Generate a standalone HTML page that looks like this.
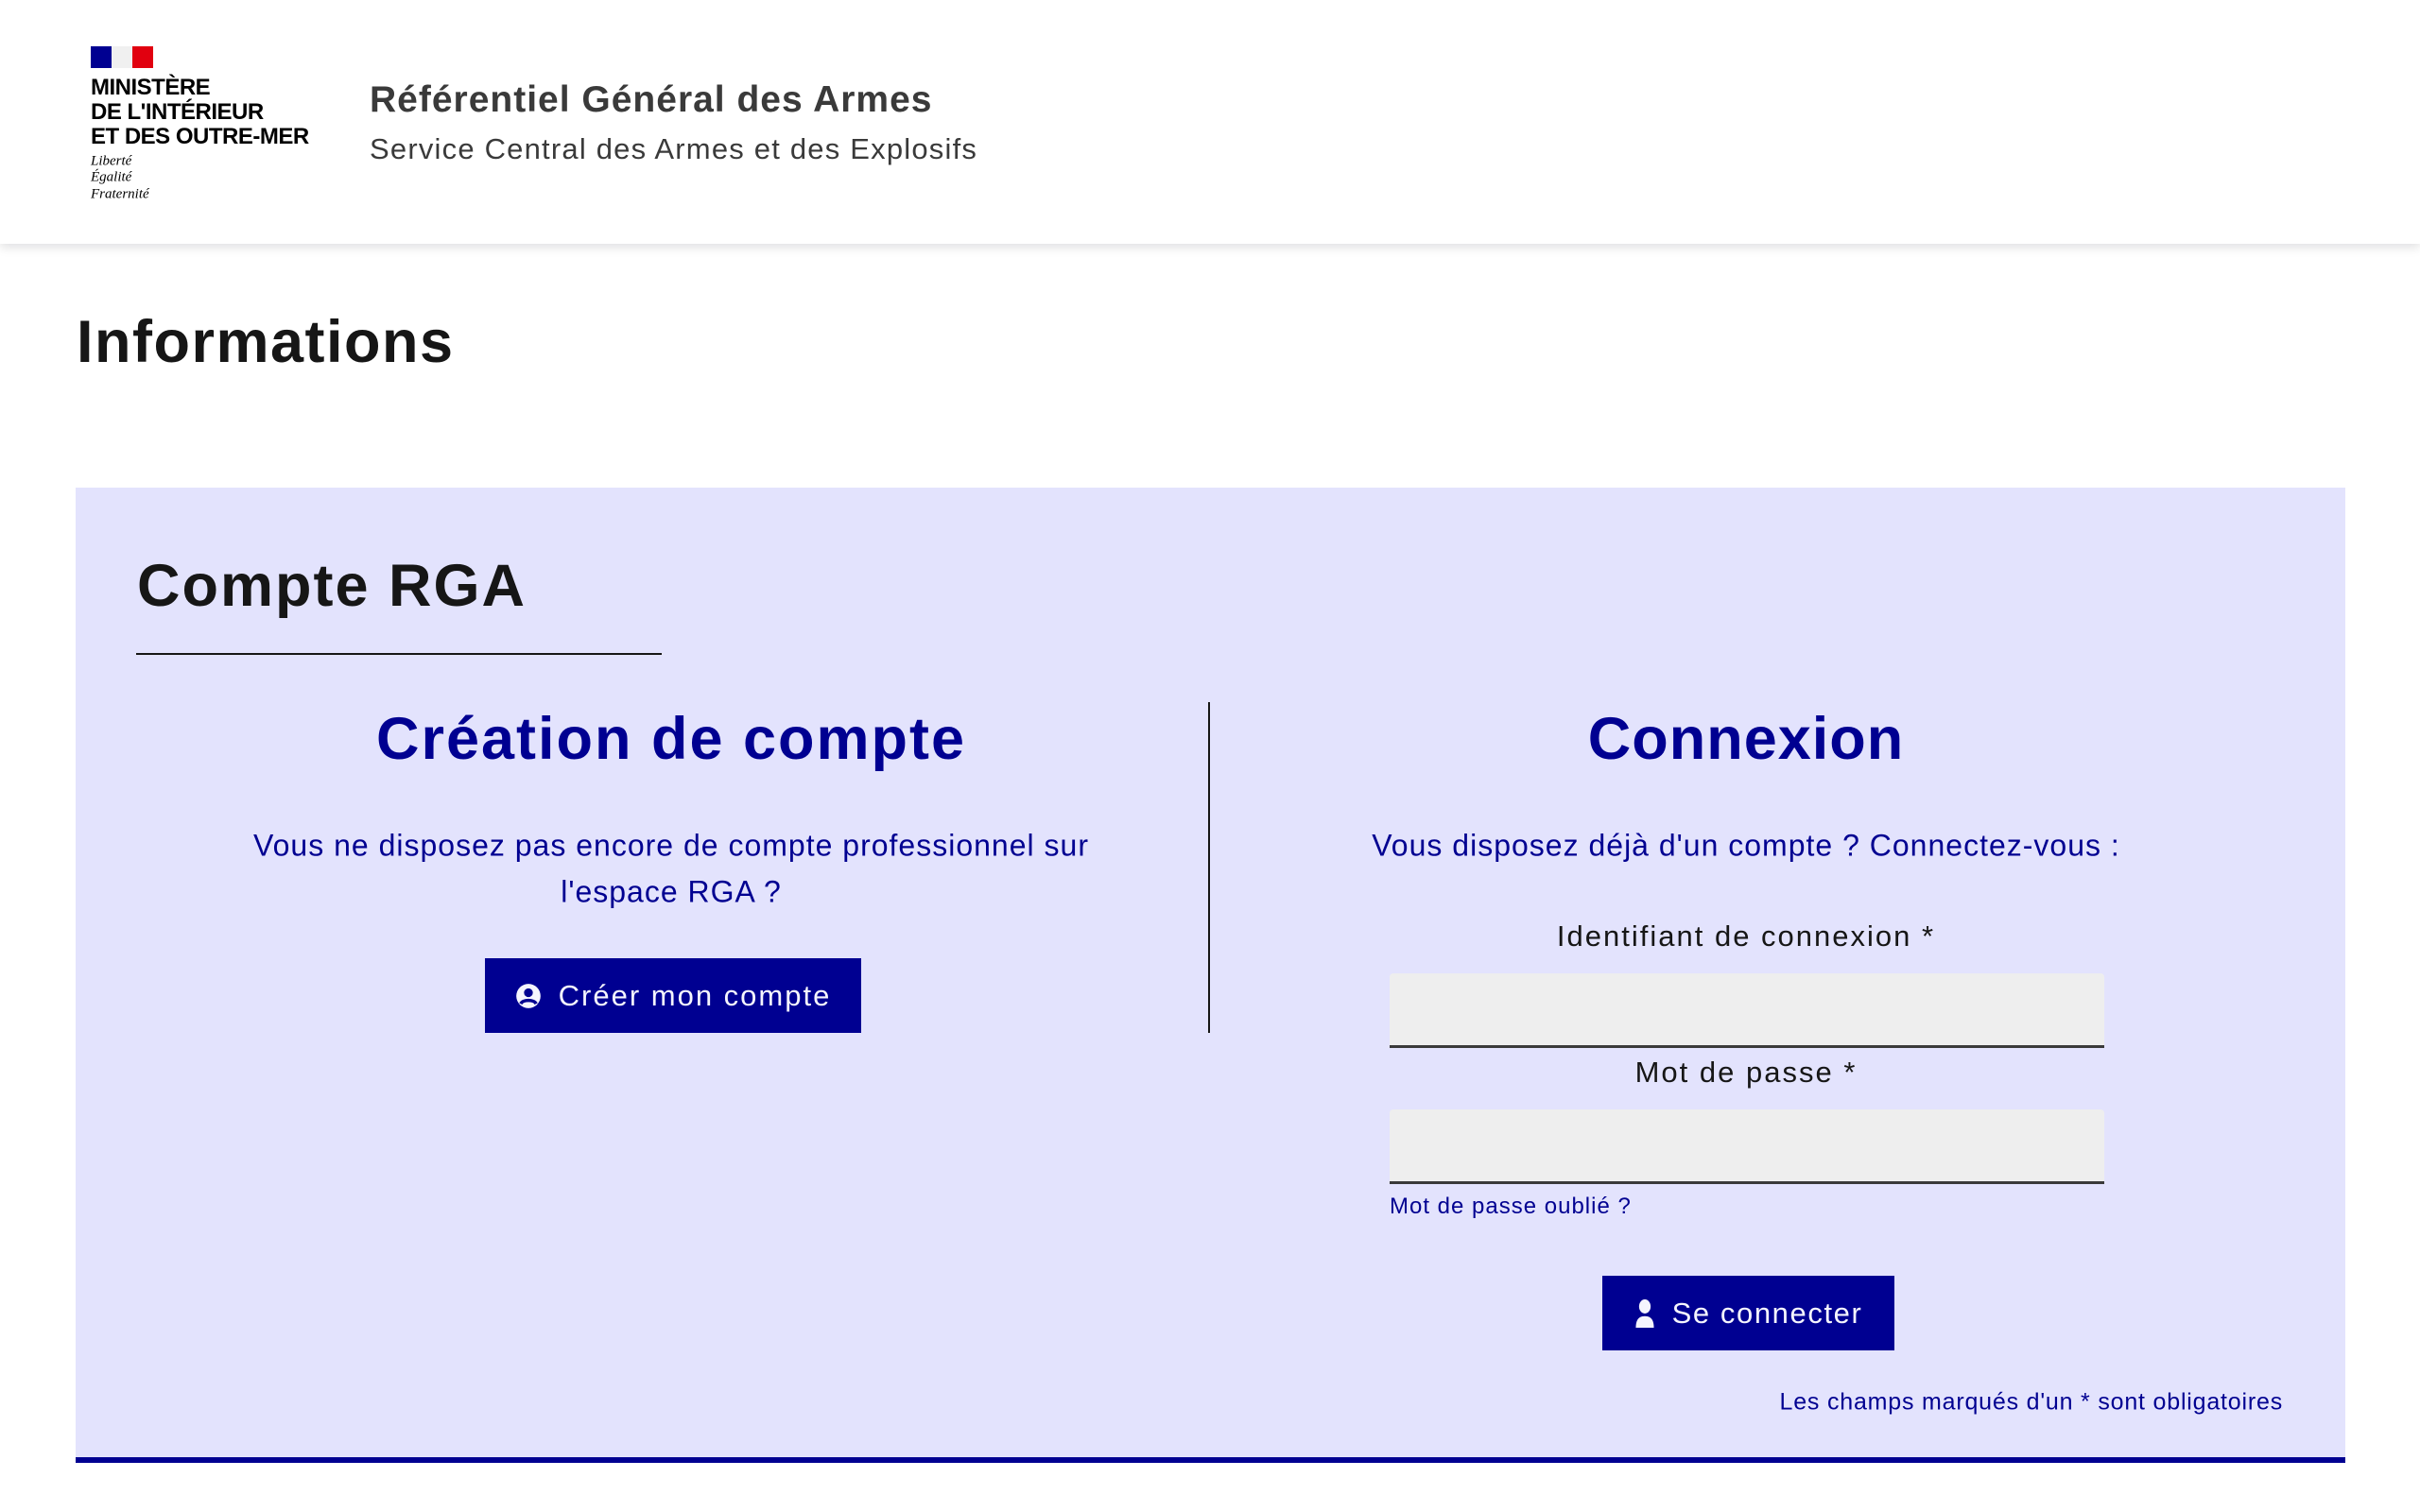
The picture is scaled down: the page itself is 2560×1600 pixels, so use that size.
<!DOCTYPE html>
<html><head><meta charset="utf-8"><style>
*{margin:0;padding:0;box-sizing:border-box}
body{width:2560px;height:1600px;background:#fff;font-family:"Liberation Sans",sans-serif;position:relative;overflow:hidden;color:#161616}
.a{position:absolute;white-space:nowrap}
.c{transform:translate(-50%,-50%)}
.m{transform:translateY(-50%)}
header{position:absolute;left:0;top:0;width:2560px;height:258px;background:#fff;box-shadow:0 4px 10px rgba(0,0,18,.12)}
.box{position:absolute;left:80px;top:516px;width:2401px;height:1032px;background:#e3e3fd;border-bottom:6px solid #000091}
.blue{color:#000091}
.btn{position:absolute;background:#000091;color:#f5f5fe;font-size:31px;display:flex;align-items:center;justify-content:center;gap:18px}
.inp{position:absolute;left:1470px;width:756px;height:79px;background:#eeeeee;border-bottom:3px solid #3a3a3a;border-radius:4px 4px 0 0}
</style></head><body>
<header>
 <div class="a" style="left:96px;top:49px;width:22px;height:23px;background:#000091"></div>
 <div class="a" style="left:118px;top:49px;width:22px;height:23px;background:#f0f0f0"></div>
 <div class="a" style="left:140px;top:49px;width:22px;height:23px;background:#e1000f"></div>
 <div class="a m" style="left:96px;top:93px;font-size:24px;font-weight:bold;letter-spacing:-0.5px;color:#000">MINISTÈRE</div>
 <div class="a m" style="left:96px;top:119px;font-size:24px;font-weight:bold;letter-spacing:-0.5px;color:#000">DE L'INTÉRIEUR</div>
 <div class="a m" style="left:96px;top:145px;font-size:24px;font-weight:bold;letter-spacing:-0.5px;color:#000">ET DES OUTRE-MER</div>
 <div class="a m" style="left:96px;top:171px;font-size:15px;font-style:italic;font-family:'Liberation Serif',serif;color:#000">Liberté</div>
 <div class="a m" style="left:96px;top:188px;font-size:15px;font-style:italic;font-family:'Liberation Serif',serif;color:#000">Égalité</div>
 <div class="a m" style="left:96px;top:206px;font-size:15px;font-style:italic;font-family:'Liberation Serif',serif;color:#000">Fraternité</div>
 <div class="a m" style="left:391px;top:106px;font-size:39px;font-weight:bold;color:#3a3a3a;letter-spacing:1px">Référentiel Général des Armes</div>
 <div class="a m" style="left:391px;top:158px;font-size:31px;color:#3a3a3a;letter-spacing:1.2px">Service Central des Armes et des Explosifs</div>
</header>
<div class="a m" style="left:81px;top:362px;font-size:63px;font-weight:bold;letter-spacing:1.5px">Informations</div>
<div class="box"></div>
<div class="a m" style="left:145px;top:620px;font-size:63px;font-weight:bold;letter-spacing:2px">Compte RGA</div>
<div class="a" style="left:144px;top:691px;width:556px;height:2px;background:#161616"></div>
<div class="a" style="left:1278px;top:743px;width:2px;height:350px;background:#161616"></div>
<div class="a c blue" style="left:710px;top:782px;font-size:63px;font-weight:bold;letter-spacing:2px">Création de compte</div>
<div class="a c blue" style="left:710px;top:895px;font-size:32px;letter-spacing:1px">Vous ne disposez pas encore de compte professionnel sur</div>
<div class="a c blue" style="left:710px;top:944px;font-size:32px;letter-spacing:1px">l'espace RGA ?</div>
<div class="btn" style="left:513px;top:1014px;width:398px;height:79px">
 <svg width="28" height="28" viewBox="0 0 24 24"><circle cx="12" cy="12" r="11" fill="#f5f5fe"/><circle cx="12" cy="9" r="4" fill="#000091"/><path d="M5 19c2-4 12-4 14 0" stroke="#000091" stroke-width="3" fill="none"/></svg>
 <span style="letter-spacing:2px">Créer mon compte</span></div>
<div class="a c blue" style="left:1847px;top:782px;font-size:63px;font-weight:bold;letter-spacing:1px">Connexion</div>
<div class="a c blue" style="left:1847px;top:895px;font-size:32px;letter-spacing:1px">Vous disposez déjà d'un compte ? Connectez-vous :</div>
<div class="a c" style="left:1847px;top:991px;font-size:31px;letter-spacing:2px">Identifiant de connexion *</div>
<div class="inp" style="top:1030px"></div>
<div class="a c" style="left:1847px;top:1135px;font-size:31px;letter-spacing:2px">Mot de passe *</div>
<div class="inp" style="top:1174px"></div>
<div class="a m blue" style="left:1470px;top:1277px;font-size:24px;letter-spacing:1px">Mot de passe oublié ?</div>
<div class="btn" style="left:1695px;top:1350px;width:309px;height:79px">
 <svg width="22" height="30" viewBox="0 0 16 22"><ellipse cx="8" cy="5.5" rx="4.5" ry="5.5" fill="#f5f5fe"/><path d="M1 22c0-7 3-9 7-9s7 2 7 9z" fill="#f5f5fe"/></svg>
 <span style="letter-spacing:1.6px">Se connecter</span></div>
<div class="a m blue" style="right:145px;top:1484px;font-size:25px;letter-spacing:0.8px">Les champs marqués d'un * sont obligatoires</div>
</body></html>
